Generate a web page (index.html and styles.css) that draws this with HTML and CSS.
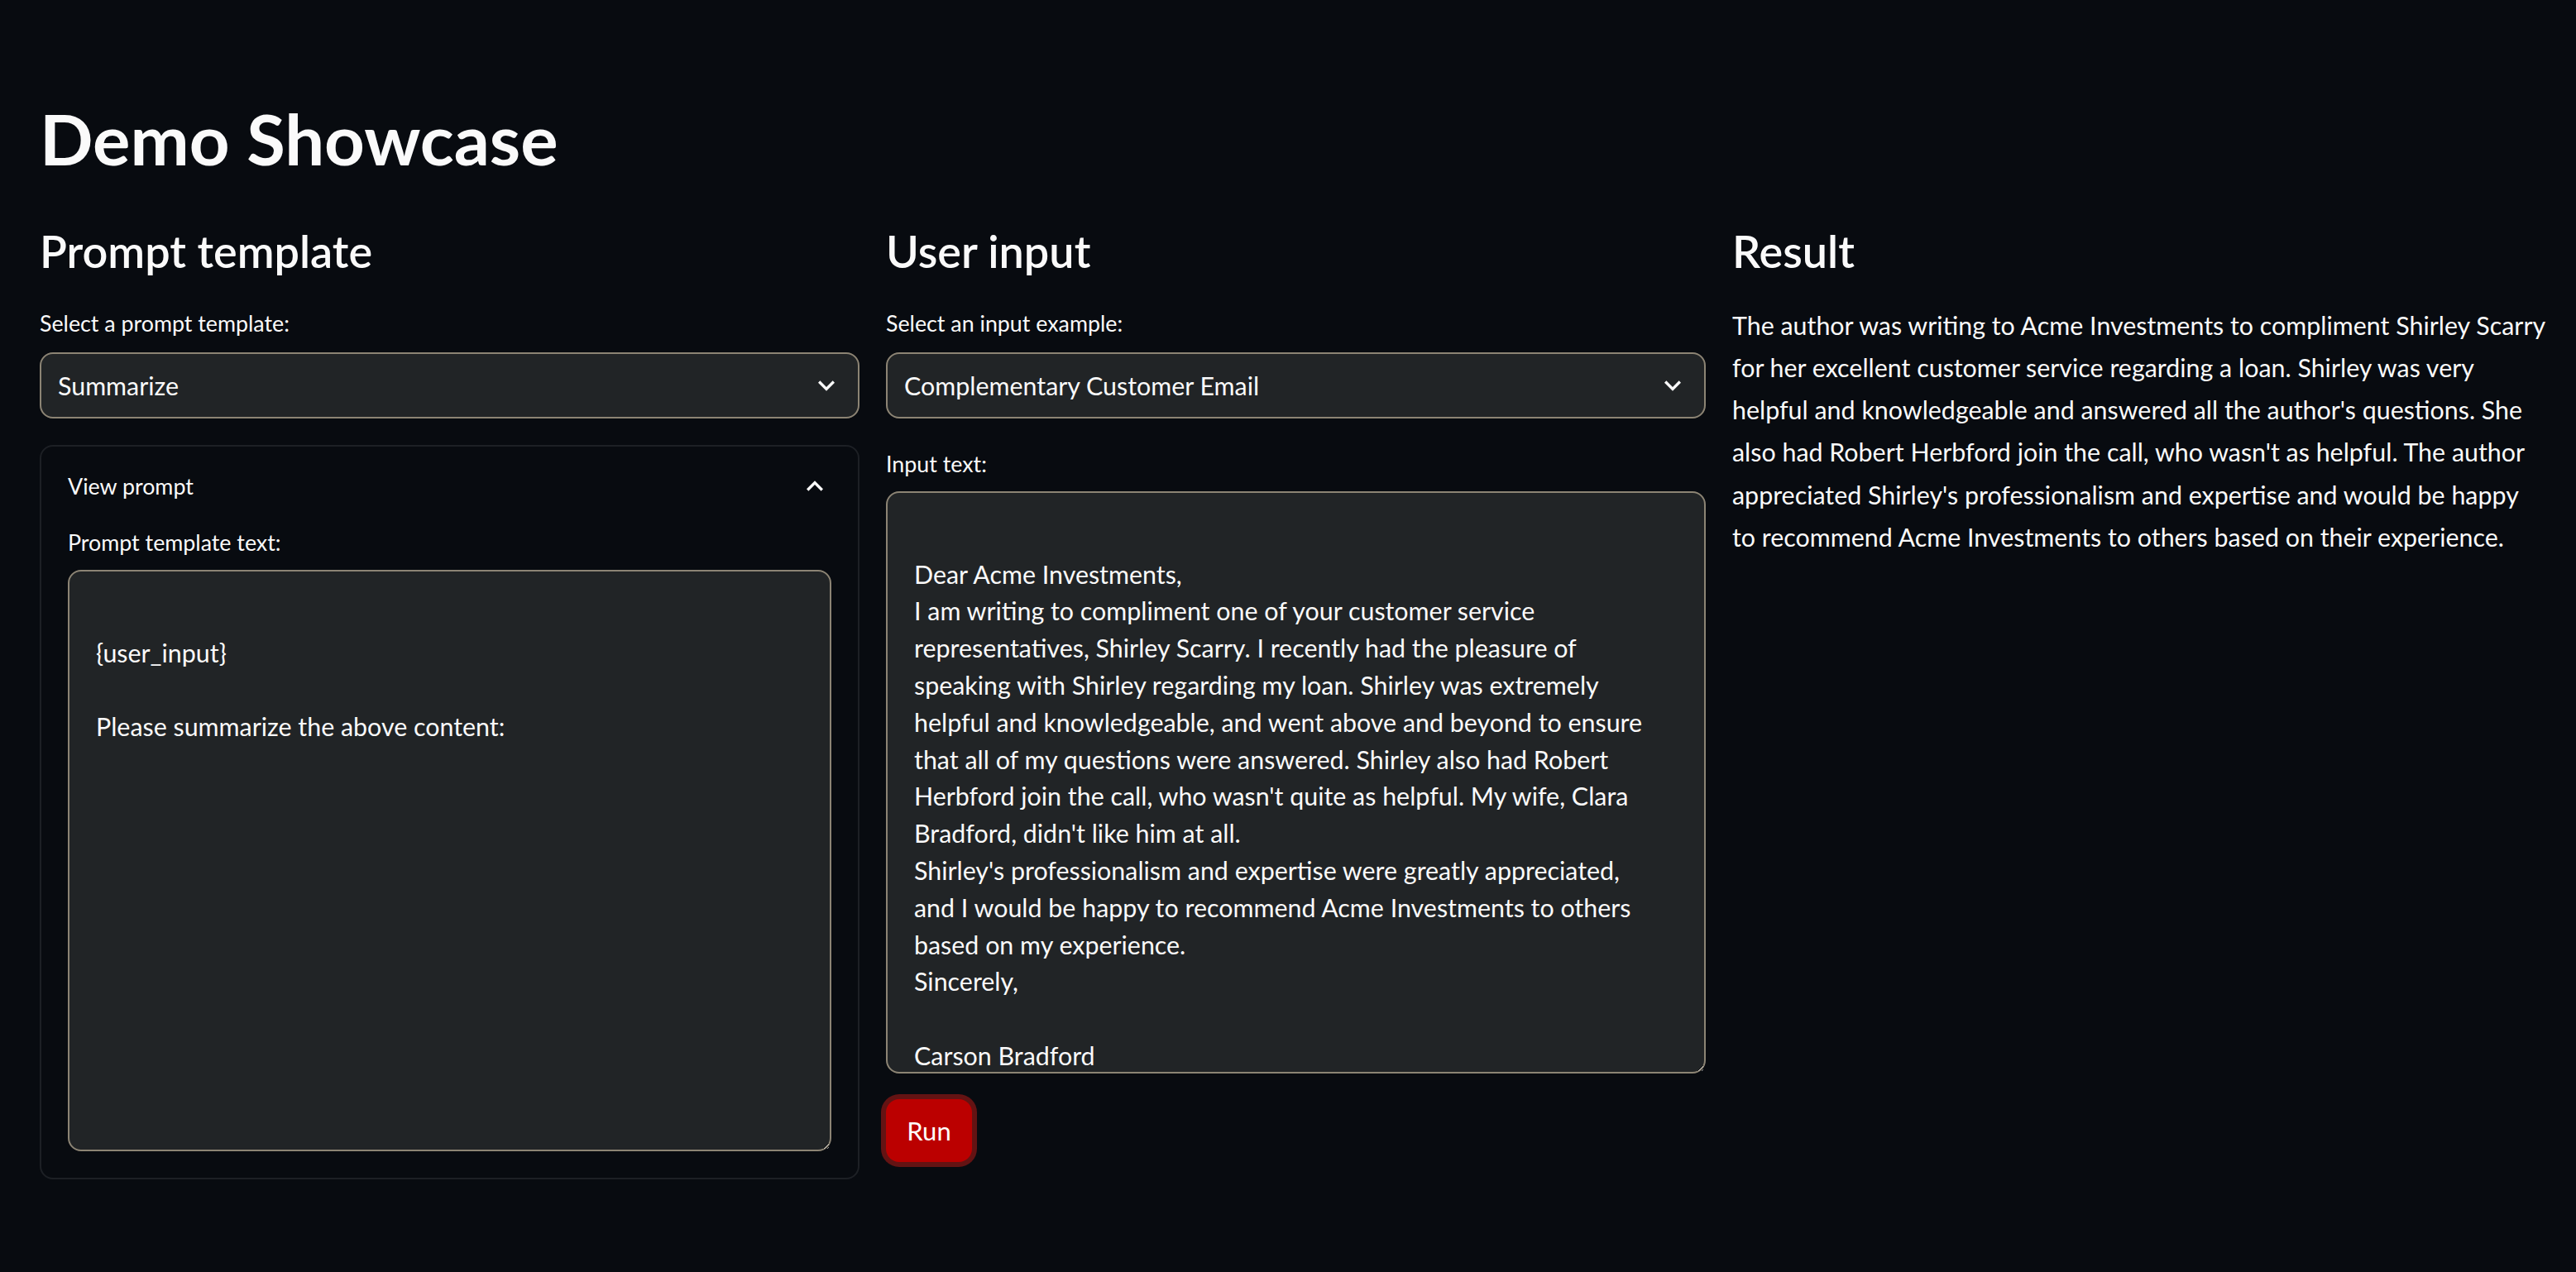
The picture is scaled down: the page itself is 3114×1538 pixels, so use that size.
FILE: index.html
```html
<!DOCTYPE html>
<html lang="en">
<head>
<meta charset="utf-8">
<title>Demo Showcase</title>
<link rel="stylesheet" href="styles.css">
</head>
<body>
<main class="app">
  <h1 class="title">Demo Showcase</h1>
  <div class="cols">
    <section class="col">
      <h3 class="heading">Prompt template</h3>
      <label class="wlabel wlabel-first">Select a prompt template:</label>
      <div class="select">
        <span>Summarize</span>
        <svg class="chev" viewBox="0 0 24 24" width="40" height="40"><path d="M16.59 8.59L12 13.17 7.41 8.59 6 10l6 6 6-6z" fill="#fafafa"/></svg>
      </div>
      <div class="expander">
        <div class="exp-head">
          <span>View prompt</span>
          <svg class="chev" viewBox="0 0 24 24" width="40" height="40"><path d="M12 8l-6 6 1.41 1.41L12 10.83l4.59 4.58L18 14z" fill="#fafafa"/></svg>
        </div>
        <label class="wlabel wlabel-exp">Prompt template text:</label>
        <textarea class="ta ta-prompt" readonly>

{user_input}

Please summarize the above content:</textarea>
      </div>
    </section>
    <section class="col">
      <h3 class="heading">User input</h3>
      <label class="wlabel wlabel-first">Select an input example:</label>
      <div class="select">
        <span>Complementary Customer Email</span>
        <svg class="chev" viewBox="0 0 24 24" width="40" height="40"><path d="M16.59 8.59L12 13.17 7.41 8.59 6 10l6 6 6-6z" fill="#fafafa"/></svg>
      </div>
      <label class="wlabel wlabel-input">Input text:</label>
      <textarea class="ta ta-input" readonly>

Dear Acme Investments,
I am writing to compliment one of your customer service
representatives, Shirley Scarry. I recently had the pleasure of
speaking with Shirley regarding my loan. Shirley was extremely
helpful and knowledgeable, and went above and beyond to ensure
that all of my questions were answered. Shirley also had Robert
Herbford join the call, who wasn't quite as helpful. My wife, Clara
Bradford, didn't like him at all.
Shirley's professionalism and expertise were greatly appreciated,
and I would be happy to recommend Acme Investments to others
based on my experience.
Sincerely,

Carson Bradford</textarea>
      <div class="btn-row"><button class="run">Run</button></div>
    </section>
    <section class="col">
      <h3 class="heading">Result</h3>
      <p class="result">The author was writing to Acme Investments to compliment Shirley Scarry<br>for her excellent customer service regarding a loan. Shirley was very<br>helpful and knowledgeable and answered all the author's questions. She<br>also had Robert Herbford join the call, who wasn't as helpful. The author<br>appreciated Shirley's professionalism and expertise and would be happy<br>to recommend Acme Investments to others based on their experience.</p>
    </section>
  </div>
</main>
</body>
</html>
```
FILE: styles.css
```css
* { box-sizing: border-box; }
body {
  margin: 0;
  background: #080b10;
  color: #fafafa;
  font-family: Lato, "Open Sans", sans-serif;
}
.app { padding: 117px 48px 0; }
.title {
  margin: 0;
  font-size: 85px;
  line-height: 100.8px;
  font-weight: 700;
}
.cols {
  display: grid;
  grid-template-columns: repeat(3, 991px);
  column-gap: 32px;
  margin-top: 56px;
  align-items: start;
}
.col { display: flex; flex-direction: column; }
.heading {
  margin: 0;
  font-size: 54px;
  line-height: 60px;
  font-weight: 600;
}
.wlabel {
  display: block;
  font-size: 26.8px;
  line-height: 36px;
}
.wlabel-first { margin-top: 39px; }
.wlabel-exp { margin-top: 32px; }
.wlabel-input { margin-top: 37px; }
.select {
  margin-top: 17px;
  height: 80px;
  background: #212426;
  border: 2px solid #8c8474;
  border-radius: 16px;
  display: flex;
  align-items: center;
  justify-content: space-between;
  padding: 0 18px 0 20px;
  font-size: 30.4px;
}
.chev { display: block; }
.expander {
  margin-top: 32px;
  border: 2px solid #1d2025;
  border-radius: 16px;
  padding: 30px 32px 32px;
}
.exp-head {
  display: flex;
  align-items: center;
  justify-content: space-between;
  height: 36px;
  font-size: 26.8px;
  line-height: 36px;
}
.ta {
  display: block;
  width: 100%;
  margin-top: 15px;
  background: #212426;
  color: #fafafa;
  border: 2px solid #8c8474;
  border-radius: 16px;
  padding: 31px 32px 32px;
  font-family: Lato, "Open Sans", sans-serif;
  font-size: 30.4px;
  line-height: 44.8px;
  overflow: hidden;
  resize: vertical;
  outline: none;
}
.ta-prompt { height: 703px; }
.ta-input { height: 704px; }
.btn-row { margin-top: 31px; display: flex; }
.run {
  width: 104px;
  height: 76px;
  background: #bb0000;
  color: #fff;
  border: none;
  border-radius: 16px;
  font-family: Lato, "Open Sans", sans-serif;
  font-size: 31px;
  box-shadow: 0 0 0 6px #641313;
}
.result {
  margin: 34px 0 0;
  font-size: 30.4px;
  line-height: 51.2px;
}
```
